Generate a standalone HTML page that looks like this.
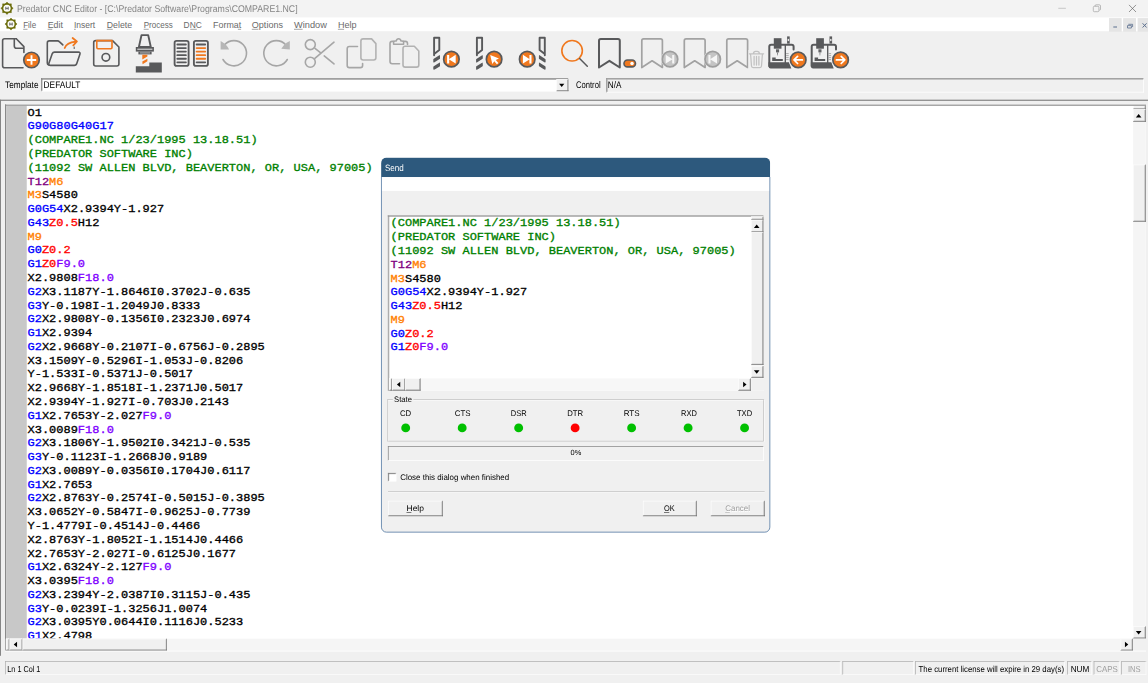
<!DOCTYPE html>
<html><head><meta charset="utf-8"><title>Predator CNC Editor</title>
<style>
html,body{margin:0;padding:0;background:#f0f0f0;overflow:hidden;}
body{width:1148px;height:683px;font-family:"Liberation Sans",sans-serif;}
svg{display:block;position:absolute;left:0;top:0;}
.code text{font-family:"Liberation Mono",monospace;font-weight:normal;font-size:11.0px;white-space:pre;stroke-width:0.32px;stroke-linejoin:round;}
text{white-space:pre;}
</style></head>
<body>
<svg width="1148" height="683" viewBox="0 0 1148 683">
<rect x="0.00" y="0.00" width="1148.00" height="683.00" fill="#f0f0f0" />
<rect x="0.00" y="0.00" width="1148.00" height="17.40" fill="#f3f3f3" />
<line x1="1058.30" y1="8.30" x2="1065.90" y2="8.30" stroke="#b4b4b4" stroke-width="0.7" />
<rect x="1093.3" y="6.3" width="5.6" height="5.4" rx="1.1" fill="none" stroke="#9a9a9a" stroke-width="0.65"/>
<path d="M1095 6.2 V5.9 Q1095 4.8 1096.1 4.8 H1099.3 Q1100.5 4.8 1100.5 6 V9.1 Q1100.5 10.2 1099.4 10.2" fill="none" stroke="#9a9a9a" stroke-width="0.65"/>
<path d="M1129 4.9 L1136 12 M1136 4.9 L1129 12" fill="none" stroke="#5e5e5e" stroke-width="0.65"/>
<polygon points="7.00,2.05 8.76,4.01 11.38,3.87 11.24,6.49 13.20,8.25 11.24,10.01 11.38,12.63 8.76,12.49 7.00,14.45 5.24,12.49 2.62,12.63 2.76,10.01 0.80,8.25 2.76,6.49 2.62,3.87 5.24,4.01" fill="#6b6c0a" stroke="#6b6c0a" stroke-width="0.5" stroke-linejoin="round"/>
<circle cx="7.0" cy="8.25" r="4.96" fill="#6b6c0a"/>
<circle cx="7.0" cy="8.25" r="3.60" fill="#fdfdfa"/>
<path d="M5.80 6.75 V9.75 M8.20 6.75 V9.75 M5.80 8.35 H8.20" stroke="#3c3c3c" stroke-width="0.75" fill="none"/>
<rect x="0.00" y="17.40" width="1148.00" height="13.80" fill="#ffffff" />
<polygon points="11.00,18.00 12.71,19.91 15.28,19.77 15.14,22.34 17.05,24.05 15.14,25.76 15.28,28.33 12.71,28.19 11.00,30.10 9.29,28.19 6.72,28.33 6.86,25.76 4.95,24.05 6.86,22.34 6.72,19.77 9.29,19.91" fill="#6b6c0a" stroke="#6b6c0a" stroke-width="0.5" stroke-linejoin="round"/>
<circle cx="11.0" cy="24.05" r="4.84" fill="#6b6c0a"/>
<circle cx="11.0" cy="24.05" r="3.51" fill="#fdfdfa"/>
<path d="M9.80 22.55 V25.55 M12.20 22.55 V25.55 M9.80 24.15 H12.20" stroke="#3c3c3c" stroke-width="0.75" fill="none"/>
<text x="23.20" y="28.00" font-family='"Liberation Sans", sans-serif' font-size="9.8" font-weight="normal" fill="#6a6a6a" text-anchor="start" textLength="12.90" lengthAdjust="spacingAndGlyphs" >File</text>
<line x1="23.20" y1="29.30" x2="27.50" y2="29.30" stroke="#6a6a6a" stroke-width="0.6" />
<text x="47.70" y="28.00" font-family='"Liberation Sans", sans-serif' font-size="9.8" font-weight="normal" fill="#6a6a6a" text-anchor="start" textLength="15.20" lengthAdjust="spacingAndGlyphs" >Edit</text>
<line x1="47.70" y1="29.30" x2="52.30" y2="29.30" stroke="#6a6a6a" stroke-width="0.6" />
<text x="74.00" y="28.00" font-family='"Liberation Sans", sans-serif' font-size="9.8" font-weight="normal" fill="#6a6a6a" text-anchor="start" textLength="21.20" lengthAdjust="spacingAndGlyphs" >Insert</text>
<line x1="74.00" y1="29.30" x2="75.80" y2="29.30" stroke="#6a6a6a" stroke-width="0.6" />
<text x="106.80" y="28.00" font-family='"Liberation Sans", sans-serif' font-size="9.8" font-weight="normal" fill="#6a6a6a" text-anchor="start" textLength="25.30" lengthAdjust="spacingAndGlyphs" >Delete</text>
<line x1="106.80" y1="29.30" x2="112.80" y2="29.30" stroke="#6a6a6a" stroke-width="0.6" />
<text x="143.70" y="28.00" font-family='"Liberation Sans", sans-serif' font-size="9.8" font-weight="normal" fill="#6a6a6a" text-anchor="start" textLength="29.00" lengthAdjust="spacingAndGlyphs" >Process</text>
<line x1="143.70" y1="29.30" x2="148.70" y2="29.30" stroke="#6a6a6a" stroke-width="0.6" />
<text x="183.60" y="28.00" font-family='"Liberation Sans", sans-serif' font-size="9.8" font-weight="normal" fill="#6a6a6a" text-anchor="start" textLength="18.20" lengthAdjust="spacingAndGlyphs" >DNC</text>
<line x1="190.20" y1="29.30" x2="196.80" y2="29.30" stroke="#6a6a6a" stroke-width="0.6" />
<text x="213.10" y="28.00" font-family='"Liberation Sans", sans-serif' font-size="9.8" font-weight="normal" fill="#6a6a6a" text-anchor="start" textLength="28.10" lengthAdjust="spacingAndGlyphs" >Format</text>
<line x1="237.90" y1="29.30" x2="241.10" y2="29.30" stroke="#6a6a6a" stroke-width="0.6" />
<text x="251.80" y="28.00" font-family='"Liberation Sans", sans-serif' font-size="9.8" font-weight="normal" fill="#6a6a6a" text-anchor="start" textLength="31.20" lengthAdjust="spacingAndGlyphs" >Options</text>
<line x1="251.80" y1="29.30" x2="258.40" y2="29.30" stroke="#6a6a6a" stroke-width="0.6" />
<text x="294.00" y="28.00" font-family='"Liberation Sans", sans-serif' font-size="9.8" font-weight="normal" fill="#6a6a6a" text-anchor="start" textLength="32.80" lengthAdjust="spacingAndGlyphs" >Window</text>
<line x1="294.00" y1="29.30" x2="302.60" y2="29.30" stroke="#6a6a6a" stroke-width="0.6" />
<text x="337.90" y="28.00" font-family='"Liberation Sans", sans-serif' font-size="9.8" font-weight="normal" fill="#6a6a6a" text-anchor="start" textLength="18.60" lengthAdjust="spacingAndGlyphs" >Help</text>
<line x1="337.90" y1="29.30" x2="344.10" y2="29.30" stroke="#6a6a6a" stroke-width="0.6" />
<rect x="1109.00" y="18.10" width="12.70" height="13.70" fill="#e5e5e5" />
<rect x="1123.10" y="18.10" width="12.90" height="13.70" fill="#e5e5e5" />
<rect x="1137.60" y="18.10" width="10.90" height="13.70" fill="#e5e5e5" />
<line x1="1113.30" y1="27.00" x2="1117.00" y2="27.00" stroke="#5b6f8e" stroke-width="1.0" />
<path d="M1128.3 24.3 H1132.6 V27 M1127.5 25.6 H1131.4 V28 H1127.5 Z" fill="none" stroke="#5b6f8e" stroke-width="0.8"/>
<path d="M1142.6 23.3 L1146.6 27.5 M1146.6 23.3 L1142.6 27.5" fill="none" stroke="#5b6f8e" stroke-width="1.0"/>
<rect x="41.00" y="78.20" width="527.60" height="13.20" fill="#ffffff" />
<rect x="41.00" y="78.20" width="527.60" height="0.65" fill="#7c7c7c" />
<rect x="41.00" y="78.20" width="0.65" height="13.20" fill="#7c7c7c" />
<rect x="41.00" y="90.75" width="527.60" height="0.65" fill="#ffffff" />
<rect x="567.95" y="78.20" width="0.65" height="13.20" fill="#ffffff" />
<rect x="41.65" y="78.85" width="526.30" height="0.65" fill="#6a6a6a" />
<rect x="41.65" y="78.85" width="0.65" height="11.90" fill="#6a6a6a" />
<rect x="556.50" y="79.20" width="11.90" height="12.00" fill="#f0f0f0" />
<rect x="556.50" y="79.20" width="11.90" height="0.60" fill="#ffffff" />
<rect x="556.50" y="79.20" width="0.60" height="12.00" fill="#ffffff" />
<rect x="557.10" y="90.00" width="11.30" height="0.60" fill="#a0a0a0" />
<rect x="567.20" y="79.80" width="0.60" height="10.80" fill="#a0a0a0" />
<rect x="556.50" y="90.60" width="11.90" height="0.60" fill="#696969" />
<rect x="567.80" y="79.20" width="0.60" height="12.00" fill="#696969" />
<polygon points="559.10,83.84 564.30,83.84 561.70,86.96" fill="#000"/>
<rect x="606.30" y="78.30" width="537.70" height="14.20" fill="#f0f0f0" />
<rect x="606.30" y="78.30" width="537.70" height="0.70" fill="#828282" />
<rect x="606.30" y="78.30" width="0.70" height="14.20" fill="#828282" />
<rect x="606.30" y="91.80" width="537.70" height="0.70" fill="#ffffff" />
<rect x="1143.30" y="78.30" width="0.70" height="14.20" fill="#ffffff" />
<rect x="607.00" y="79.00" width="536.30" height="0.70" fill="#b0b0b0" />
<rect x="607.00" y="79.00" width="0.70" height="12.80" fill="#b0b0b0" />
<rect x="0.00" y="99.60" width="1148.00" height="1.40" fill="#939393" />
<rect x="0.00" y="99.70" width="0.95" height="556.10" fill="#808080" />
<rect x="5.20" y="104.30" width="1140.80" height="546.30" fill="#ffffff" />
<rect x="5.00" y="104.30" width="1.10" height="546.30" fill="#8a8a8a" />
<rect x="6.10" y="105.90" width="20.65" height="532.80" fill="#c8c8c8" />
<g class="code">
<clipPath id="edclip"><rect x="26.8" y="105.8" width="1106.2" height="532.80"/></clipPath>
<g clip-path="url(#edclip)">
<text x="27.55" y="115.70" textLength="14.38" lengthAdjust="spacingAndGlyphs"><tspan fill="#000000" stroke="#000000">O1</tspan></text>
<text x="27.55" y="129.47" textLength="86.28" lengthAdjust="spacingAndGlyphs"><tspan fill="#0000ff" stroke="#0000ff">G90G80G40G17</tspan></text>
<text x="27.55" y="143.25" textLength="230.08" lengthAdjust="spacingAndGlyphs"><tspan fill="#008000" stroke="#008000">(COMPARE1.NC 1/23/1995 13.18.51)</tspan></text>
<text x="27.55" y="157.03" textLength="165.37" lengthAdjust="spacingAndGlyphs"><tspan fill="#008000" stroke="#008000">(PREDATOR SOFTWARE INC)</tspan></text>
<text x="27.55" y="170.80" textLength="345.12" lengthAdjust="spacingAndGlyphs"><tspan fill="#008000" stroke="#008000">(11092 SW ALLEN BLVD, BEAVERTON, OR, USA, 97005)</tspan></text>
<text x="27.55" y="184.57" textLength="35.95" lengthAdjust="spacingAndGlyphs"><tspan fill="#800080" stroke="#800080">T12</tspan><tspan fill="#ff8000" stroke="#ff8000">M6</tspan></text>
<text x="27.55" y="198.35" textLength="50.33" lengthAdjust="spacingAndGlyphs"><tspan fill="#ff8000" stroke="#ff8000">M3</tspan><tspan fill="#000000" stroke="#000000">S4580</tspan></text>
<text x="27.55" y="212.12" textLength="136.61" lengthAdjust="spacingAndGlyphs"><tspan fill="#0000ff" stroke="#0000ff">G0G54</tspan><tspan fill="#000000" stroke="#000000">X2.9394Y-1.927</tspan></text>
<text x="27.55" y="225.90" textLength="71.90" lengthAdjust="spacingAndGlyphs"><tspan fill="#0000ff" stroke="#0000ff">G43</tspan><tspan fill="#ff0000" stroke="#ff0000">Z0.5</tspan><tspan fill="#000000" stroke="#000000">H12</tspan></text>
<text x="27.55" y="239.68" textLength="14.38" lengthAdjust="spacingAndGlyphs"><tspan fill="#ff8000" stroke="#ff8000">M9</tspan></text>
<text x="27.55" y="253.45" textLength="43.14" lengthAdjust="spacingAndGlyphs"><tspan fill="#0000ff" stroke="#0000ff">G0</tspan><tspan fill="#ff0000" stroke="#ff0000">Z0.2</tspan></text>
<text x="27.55" y="267.23" textLength="57.52" lengthAdjust="spacingAndGlyphs"><tspan fill="#0000ff" stroke="#0000ff">G1</tspan><tspan fill="#ff0000" stroke="#ff0000">Z0</tspan><tspan fill="#8000ff" stroke="#8000ff">F9.0</tspan></text>
<text x="27.55" y="281.00" textLength="86.28" lengthAdjust="spacingAndGlyphs"><tspan fill="#000000" stroke="#000000">X2.9808</tspan><tspan fill="#8000ff" stroke="#8000ff">F18.0</tspan></text>
<text x="27.55" y="294.78" textLength="222.89" lengthAdjust="spacingAndGlyphs"><tspan fill="#0000ff" stroke="#0000ff">G2</tspan><tspan fill="#000000" stroke="#000000">X3.1187Y-1.8646I0.3702J-0.635</tspan></text>
<text x="27.55" y="308.55" textLength="172.56" lengthAdjust="spacingAndGlyphs"><tspan fill="#0000ff" stroke="#0000ff">G3</tspan><tspan fill="#000000" stroke="#000000">Y-0.198I-1.2049J0.8333</tspan></text>
<text x="27.55" y="322.32" textLength="222.89" lengthAdjust="spacingAndGlyphs"><tspan fill="#0000ff" stroke="#0000ff">G2</tspan><tspan fill="#000000" stroke="#000000">X2.9808Y-0.1356I0.2323J0.6974</tspan></text>
<text x="27.55" y="336.10" textLength="64.71" lengthAdjust="spacingAndGlyphs"><tspan fill="#0000ff" stroke="#0000ff">G1</tspan><tspan fill="#000000" stroke="#000000">X2.9394</tspan></text>
<text x="27.55" y="349.88" textLength="237.27" lengthAdjust="spacingAndGlyphs"><tspan fill="#0000ff" stroke="#0000ff">G2</tspan><tspan fill="#000000" stroke="#000000">X2.9668Y-0.2107I-0.6756J-0.2895</tspan></text>
<text x="27.55" y="363.65" textLength="215.70" lengthAdjust="spacingAndGlyphs"><tspan fill="#000000" stroke="#000000">X3.1509Y-0.5296I-1.053J-0.8206</tspan></text>
<text x="27.55" y="377.43" textLength="165.37" lengthAdjust="spacingAndGlyphs"><tspan fill="#000000" stroke="#000000">Y-1.533I-0.5371J-0.5017</tspan></text>
<text x="27.55" y="391.20" textLength="215.70" lengthAdjust="spacingAndGlyphs"><tspan fill="#000000" stroke="#000000">X2.9668Y-1.8518I-1.2371J0.5017</tspan></text>
<text x="27.55" y="404.98" textLength="201.32" lengthAdjust="spacingAndGlyphs"><tspan fill="#000000" stroke="#000000">X2.9394Y-1.927I-0.703J0.2143</tspan></text>
<text x="27.55" y="418.75" textLength="143.80" lengthAdjust="spacingAndGlyphs"><tspan fill="#0000ff" stroke="#0000ff">G1</tspan><tspan fill="#000000" stroke="#000000">X2.7653Y-2.027</tspan><tspan fill="#8000ff" stroke="#8000ff">F9.0</tspan></text>
<text x="27.55" y="432.52" textLength="86.28" lengthAdjust="spacingAndGlyphs"><tspan fill="#000000" stroke="#000000">X3.0089</tspan><tspan fill="#8000ff" stroke="#8000ff">F18.0</tspan></text>
<text x="27.55" y="446.30" textLength="222.89" lengthAdjust="spacingAndGlyphs"><tspan fill="#0000ff" stroke="#0000ff">G2</tspan><tspan fill="#000000" stroke="#000000">X3.1806Y-1.9502I0.3421J-0.535</tspan></text>
<text x="27.55" y="460.07" textLength="179.75" lengthAdjust="spacingAndGlyphs"><tspan fill="#0000ff" stroke="#0000ff">G3</tspan><tspan fill="#000000" stroke="#000000">Y-0.1123I-1.2668J0.9189</tspan></text>
<text x="27.55" y="473.85" textLength="222.89" lengthAdjust="spacingAndGlyphs"><tspan fill="#0000ff" stroke="#0000ff">G2</tspan><tspan fill="#000000" stroke="#000000">X3.0089Y-0.0356I0.1704J0.6117</tspan></text>
<text x="27.55" y="487.62" textLength="64.71" lengthAdjust="spacingAndGlyphs"><tspan fill="#0000ff" stroke="#0000ff">G1</tspan><tspan fill="#000000" stroke="#000000">X2.7653</tspan></text>
<text x="27.55" y="501.40" textLength="237.27" lengthAdjust="spacingAndGlyphs"><tspan fill="#0000ff" stroke="#0000ff">G2</tspan><tspan fill="#000000" stroke="#000000">X2.8763Y-0.2574I-0.5015J-0.3895</tspan></text>
<text x="27.55" y="515.18" textLength="222.89" lengthAdjust="spacingAndGlyphs"><tspan fill="#000000" stroke="#000000">X3.0652Y-0.5847I-0.9625J-0.7739</tspan></text>
<text x="27.55" y="528.95" textLength="172.56" lengthAdjust="spacingAndGlyphs"><tspan fill="#000000" stroke="#000000">Y-1.4779I-0.4514J-0.4466</tspan></text>
<text x="27.55" y="542.73" textLength="215.70" lengthAdjust="spacingAndGlyphs"><tspan fill="#000000" stroke="#000000">X2.8763Y-1.8052I-1.1514J0.4466</tspan></text>
<text x="27.55" y="556.50" textLength="208.51" lengthAdjust="spacingAndGlyphs"><tspan fill="#000000" stroke="#000000">X2.7653Y-2.027I-0.6125J0.1677</tspan></text>
<text x="27.55" y="570.27" textLength="143.80" lengthAdjust="spacingAndGlyphs"><tspan fill="#0000ff" stroke="#0000ff">G1</tspan><tspan fill="#000000" stroke="#000000">X2.6324Y-2.127</tspan><tspan fill="#8000ff" stroke="#8000ff">F9.0</tspan></text>
<text x="27.55" y="584.05" textLength="86.28" lengthAdjust="spacingAndGlyphs"><tspan fill="#000000" stroke="#000000">X3.0395</tspan><tspan fill="#8000ff" stroke="#8000ff">F18.0</tspan></text>
<text x="27.55" y="597.83" textLength="222.89" lengthAdjust="spacingAndGlyphs"><tspan fill="#0000ff" stroke="#0000ff">G2</tspan><tspan fill="#000000" stroke="#000000">X3.2394Y-2.0387I0.3115J-0.435</tspan></text>
<text x="27.55" y="611.60" textLength="179.75" lengthAdjust="spacingAndGlyphs"><tspan fill="#0000ff" stroke="#0000ff">G3</tspan><tspan fill="#000000" stroke="#000000">Y-0.0239I-1.3256J1.0074</tspan></text>
<text x="27.55" y="625.38" textLength="215.70" lengthAdjust="spacingAndGlyphs"><tspan fill="#0000ff" stroke="#0000ff">G2</tspan><tspan fill="#000000" stroke="#000000">X3.0395Y0.0644I0.1116J0.5233</tspan></text>
<text x="27.55" y="639.15" textLength="64.71" lengthAdjust="spacingAndGlyphs"><tspan fill="#0000ff" stroke="#0000ff">G1</tspan><tspan fill="#000000" stroke="#000000">X2.4798</tspan></text>
</g></g>
<rect x="1133.10" y="105.60" width="12.70" height="532.50" fill="#f5f5f5" />
<rect x="1133.10" y="105.70" width="12.70" height="3.70" fill="#f0f0f0" />
<rect x="1133.10" y="105.70" width="12.70" height="0.60" fill="#ffffff" />
<rect x="1133.10" y="105.70" width="0.60" height="3.70" fill="#ffffff" />
<rect x="1133.70" y="108.20" width="12.10" height="0.60" fill="#a0a0a0" />
<rect x="1144.60" y="106.30" width="0.60" height="2.50" fill="#a0a0a0" />
<rect x="1133.10" y="108.80" width="12.70" height="0.60" fill="#696969" />
<rect x="1145.20" y="105.70" width="0.60" height="3.70" fill="#696969" />
<rect x="1133.10" y="109.40" width="12.70" height="12.50" fill="#f0f0f0" />
<rect x="1133.10" y="109.40" width="12.70" height="0.60" fill="#ffffff" />
<rect x="1133.10" y="109.40" width="0.60" height="12.50" fill="#ffffff" />
<rect x="1133.70" y="120.70" width="12.10" height="0.60" fill="#a0a0a0" />
<rect x="1144.60" y="110.00" width="0.60" height="11.30" fill="#a0a0a0" />
<rect x="1133.10" y="121.30" width="12.70" height="0.60" fill="#696969" />
<rect x="1145.20" y="109.40" width="0.60" height="12.50" fill="#696969" />
<polygon points="1135.85,117.38 1141.45,117.38 1138.65,114.02" fill="#000"/>
<rect x="1133.10" y="164.60" width="12.70" height="57.20" fill="#f0f0f0" />
<rect x="1133.10" y="164.60" width="12.70" height="0.60" fill="#ffffff" />
<rect x="1133.10" y="164.60" width="0.60" height="57.20" fill="#ffffff" />
<rect x="1133.70" y="220.60" width="12.10" height="0.60" fill="#a0a0a0" />
<rect x="1144.60" y="165.20" width="0.60" height="56.00" fill="#a0a0a0" />
<rect x="1133.10" y="221.20" width="12.70" height="0.60" fill="#696969" />
<rect x="1145.20" y="164.60" width="0.60" height="57.20" fill="#696969" />
<rect x="1133.10" y="626.40" width="12.70" height="12.10" fill="#f0f0f0" />
<rect x="1133.10" y="626.40" width="12.70" height="0.60" fill="#ffffff" />
<rect x="1133.10" y="626.40" width="0.60" height="12.10" fill="#ffffff" />
<rect x="1133.70" y="637.30" width="12.10" height="0.60" fill="#a0a0a0" />
<rect x="1144.60" y="627.00" width="0.60" height="10.90" fill="#a0a0a0" />
<rect x="1133.10" y="637.90" width="12.70" height="0.60" fill="#696969" />
<rect x="1145.20" y="626.40" width="0.60" height="12.10" fill="#696969" />
<polygon points="1135.85,631.02 1141.45,631.02 1138.65,634.38" fill="#000"/>
<rect x="5.90" y="638.70" width="1127.10" height="11.90" fill="#f5f5f5" />
<rect x="5.90" y="638.70" width="3.70" height="11.90" fill="#f0f0f0" />
<rect x="5.90" y="638.70" width="3.70" height="0.60" fill="#ffffff" />
<rect x="5.90" y="638.70" width="0.60" height="11.90" fill="#ffffff" />
<rect x="6.50" y="649.40" width="3.10" height="0.60" fill="#a0a0a0" />
<rect x="8.40" y="639.30" width="0.60" height="10.70" fill="#a0a0a0" />
<rect x="5.90" y="650.00" width="3.70" height="0.60" fill="#696969" />
<rect x="9.00" y="638.70" width="0.60" height="11.90" fill="#696969" />
<rect x="9.60" y="638.70" width="13.00" height="11.90" fill="#f0f0f0" />
<rect x="9.60" y="638.70" width="13.00" height="0.60" fill="#ffffff" />
<rect x="9.60" y="638.70" width="0.60" height="11.90" fill="#ffffff" />
<rect x="10.20" y="649.40" width="12.40" height="0.60" fill="#a0a0a0" />
<rect x="21.40" y="639.30" width="0.60" height="10.70" fill="#a0a0a0" />
<rect x="9.60" y="650.00" width="13.00" height="0.60" fill="#696969" />
<rect x="22.00" y="638.70" width="0.60" height="11.90" fill="#696969" />
<polygon points="17.08,641.70 17.08,647.30 13.72,644.50" fill="#000"/>
<rect x="22.60" y="638.70" width="144.40" height="11.90" fill="#f0f0f0" />
<rect x="22.60" y="638.70" width="144.40" height="0.60" fill="#ffffff" />
<rect x="22.60" y="638.70" width="0.60" height="11.90" fill="#ffffff" />
<rect x="23.20" y="649.40" width="143.80" height="0.60" fill="#a0a0a0" />
<rect x="165.80" y="639.30" width="0.60" height="10.70" fill="#a0a0a0" />
<rect x="22.60" y="650.00" width="144.40" height="0.60" fill="#696969" />
<rect x="166.40" y="638.70" width="0.60" height="11.90" fill="#696969" />
<rect x="1120.60" y="638.70" width="12.30" height="11.90" fill="#f0f0f0" />
<rect x="1120.60" y="638.70" width="12.30" height="0.60" fill="#ffffff" />
<rect x="1120.60" y="638.70" width="0.60" height="11.90" fill="#ffffff" />
<rect x="1121.20" y="649.40" width="11.70" height="0.60" fill="#a0a0a0" />
<rect x="1131.70" y="639.30" width="0.60" height="10.70" fill="#a0a0a0" />
<rect x="1120.60" y="650.00" width="12.30" height="0.60" fill="#696969" />
<rect x="1132.30" y="638.70" width="0.60" height="11.90" fill="#696969" />
<polygon points="1124.92,641.70 1124.92,647.30 1128.28,644.50" fill="#000"/>
<rect x="1133.00" y="638.70" width="13.00" height="11.90" fill="#f0f0f0" />
<rect x="5.00" y="650.70" width="1141.00" height="1.00" fill="#fbfbfb" />
<rect x="5.20" y="104.50" width="1140.80" height="0.70" fill="#a0a0a0" />
<rect x="5.20" y="105.20" width="1140.80" height="0.70" fill="#8a8a8a" />
<rect x="5.20" y="661.20" width="835.30" height="13.60" fill="#f0f0f0" />
<rect x="5.20" y="661.20" width="835.30" height="0.60" fill="#a0a0a0" />
<rect x="5.20" y="661.20" width="0.60" height="13.60" fill="#a0a0a0" />
<rect x="5.20" y="674.20" width="835.30" height="0.60" fill="#ffffff" />
<rect x="839.90" y="661.20" width="0.60" height="13.60" fill="#ffffff" />
<rect x="842.50" y="661.20" width="71.20" height="13.60" fill="#f0f0f0" />
<rect x="842.50" y="661.20" width="71.20" height="0.60" fill="#a0a0a0" />
<rect x="842.50" y="661.20" width="0.60" height="13.60" fill="#a0a0a0" />
<rect x="842.50" y="674.20" width="71.20" height="0.60" fill="#ffffff" />
<rect x="913.10" y="661.20" width="0.60" height="13.60" fill="#ffffff" />
<rect x="915.30" y="661.20" width="149.60" height="13.60" fill="#f0f0f0" />
<rect x="915.30" y="661.20" width="149.60" height="0.60" fill="#a0a0a0" />
<rect x="915.30" y="661.20" width="0.60" height="13.60" fill="#a0a0a0" />
<rect x="915.30" y="674.20" width="149.60" height="0.60" fill="#ffffff" />
<rect x="1064.30" y="661.20" width="0.60" height="13.60" fill="#ffffff" />
<rect x="1067.40" y="661.20" width="24.40" height="13.60" fill="#f0f0f0" />
<rect x="1067.40" y="661.20" width="24.40" height="0.60" fill="#a0a0a0" />
<rect x="1067.40" y="661.20" width="0.60" height="13.60" fill="#a0a0a0" />
<rect x="1067.40" y="674.20" width="24.40" height="0.60" fill="#ffffff" />
<rect x="1091.20" y="661.20" width="0.60" height="13.60" fill="#ffffff" />
<rect x="1093.70" y="661.20" width="25.80" height="13.60" fill="#f0f0f0" />
<rect x="1093.70" y="661.20" width="25.80" height="0.60" fill="#a0a0a0" />
<rect x="1093.70" y="661.20" width="0.60" height="13.60" fill="#a0a0a0" />
<rect x="1093.70" y="674.20" width="25.80" height="0.60" fill="#ffffff" />
<rect x="1118.90" y="661.20" width="0.60" height="13.60" fill="#ffffff" />
<rect x="1121.40" y="661.20" width="24.90" height="13.60" fill="#f0f0f0" />
<rect x="1121.40" y="661.20" width="24.90" height="0.60" fill="#a0a0a0" />
<rect x="1121.40" y="661.20" width="0.60" height="13.60" fill="#a0a0a0" />
<rect x="1121.40" y="674.20" width="24.90" height="0.60" fill="#ffffff" />
<rect x="1145.70" y="661.20" width="0.60" height="13.60" fill="#ffffff" />
<g id="toolbar">
<path d="M23.9 52.5 V48.2 M16.3 38.8 H4.6 Q2.6 38.8 2.6 40.8 V65.7 Q2.6 67.7 4.6 67.7 H23.0 M16.3 38.8 L23.9 46.6 V48.2 H16.6 Q14.3 48.2 14.3 45.9 V38.8" fill="none" stroke="#58595b" stroke-width="1.6" stroke-linecap="round" stroke-linejoin="round" />
<circle cx="31.50" cy="60.00" r="7.75" fill="#f0781e" stroke="#58595b" stroke-width="1.7"/>
<path d="M26.8 60 H36.2 M31.5 55.3 V64.7" stroke="#fff" stroke-width="1.9" fill="none"/>
<path d="M48.6 65.0 Q47.3 64.6 47.3 63.0 V42.9 Q47.3 40.9 49.3 40.9 H57.6 Q58.6 40.9 59.3 41.6 L62.8 44.9" fill="none" stroke="#58595b" stroke-width="1.6" stroke-linecap="round" stroke-linejoin="round" />
<path d="M74.2 47.0 V48.6" fill="none" stroke="#58595b" stroke-width="1.0" stroke-linecap="round" stroke-linejoin="round" />
<path d="M50.6 65.4 Q48.2 65.4 48.9 63.2 L52.3 53.6 Q52.9 52.1 54.5 52.1 H78.4 Q80.6 52.1 79.9 54.2 L76.6 63.9 Q76.0 65.4 74.4 65.4 Z" fill="none" stroke="#58595b" stroke-width="1.6" stroke-linecap="round" stroke-linejoin="round" />
<path d="M64.7 48.0 Q66.6 42.6 75.6 41.6 M72.6 38.0 L76.9 41.5 L73.3 45.4" fill="none" stroke="#f0781e" stroke-width="1.8" stroke-linecap="round" stroke-linejoin="round" />
<path d="M95.7 40.6 H112.5 L118.9 47.0 V64.0 Q118.9 66.0 116.9 66.0 H95.7 Q93.7 66.0 93.7 64.0 V42.6 Q93.7 40.6 95.7 40.6 Z" fill="none" stroke="#58595b" stroke-width="1.6" stroke-linecap="round" stroke-linejoin="round" />
<path d="M96.8 40.6 V47.6 Q96.8 48.8 98.0 48.8 H110.8 Q112.0 48.8 112.0 47.6 V40.6 Z" fill="none" stroke="#f0781e" stroke-width="1.6" stroke-linecap="round" stroke-linejoin="round" />
<circle cx="105.90" cy="57.30" r="3.85" fill="none" stroke="#58595b" stroke-width="1.6"/>
<path d="M141.5 35.1 H148.2 L150.8 47.0 H138.9 Z" fill="none" stroke="#58595b" stroke-width="1.9" stroke-linecap="round" stroke-linejoin="round" />
<rect x="135.8" y="47.0" width="18.1" height="4.6" fill="#58595b"/>
<rect x="137.3" y="48.7" width="15.1" height="1.0" fill="#e9e9e9"/>
<rect x="138.4" y="51.6" width="13.2" height="2.8" fill="#58595b"/>
<rect x="139.9" y="52.6" width="10.2" height="0.7" fill="#d9d9d9"/>
<path d="M142.3 54.8 H147.4 V56.5 L142.3 59.4 Z M142.3 61.6 L147.4 58.7 V61.3 L142.6 64.2 Z" fill="#f0781e"/>
<path d="M135.8 66.2 H149.3 V62.6 H161.8 V72.5 H135.8 Z" fill="#58595b"/>
<rect x="174.6" y="40.9" width="14.0" height="24.9" rx="1.9" fill="none" stroke="#58595b" stroke-width="1.85"/>
<line x1="177.30" y1="44.50" x2="185.90" y2="44.50" stroke="#58595b" stroke-width="1.8" stroke-linecap="round"/>
<line x1="177.30" y1="48.06" x2="185.90" y2="48.06" stroke="#58595b" stroke-width="1.8" stroke-linecap="round"/>
<line x1="177.30" y1="51.62" x2="185.90" y2="51.62" stroke="#58595b" stroke-width="1.8" stroke-linecap="round"/>
<line x1="177.30" y1="55.18" x2="185.90" y2="55.18" stroke="#58595b" stroke-width="1.8" stroke-linecap="round"/>
<line x1="177.30" y1="58.74" x2="185.90" y2="58.74" stroke="#58595b" stroke-width="1.8" stroke-linecap="round"/>
<line x1="177.30" y1="62.30" x2="185.90" y2="62.30" stroke="#58595b" stroke-width="1.8" stroke-linecap="round"/>
<rect x="193.9" y="40.9" width="14.0" height="24.9" rx="1.9" fill="none" stroke="#58595b" stroke-width="1.85"/>
<line x1="196.60" y1="44.50" x2="205.20" y2="44.50" stroke="#58595b" stroke-width="1.8" stroke-linecap="round"/>
<line x1="196.60" y1="48.06" x2="205.20" y2="48.06" stroke="#f0781e" stroke-width="1.8" stroke-linecap="round"/>
<line x1="196.60" y1="51.62" x2="205.20" y2="51.62" stroke="#f0781e" stroke-width="1.8" stroke-linecap="round"/>
<line x1="196.60" y1="55.18" x2="205.20" y2="55.18" stroke="#f0781e" stroke-width="1.8" stroke-linecap="round"/>
<line x1="196.60" y1="58.74" x2="205.20" y2="58.74" stroke="#f0781e" stroke-width="1.8" stroke-linecap="round"/>
<line x1="196.60" y1="62.30" x2="205.20" y2="62.30" stroke="#58595b" stroke-width="1.8" stroke-linecap="round"/>
<path d="M224.54 44.77 A12.6 12.6 0 1 1 222.99 59.50" fill="none" stroke="#a6a6a6" stroke-width="1.6" stroke-linecap="round" stroke-linejoin="round" />
<path d="M220.6 41.0 L220.6 49.4 L229.1 49.4 Q226.5 44.0 220.6 41.0 Z" fill="#b6b6b6" transform="rotate(0)"/>
<path d="M285.76 44.77 A12.6 12.6 0 1 0 287.31 59.50" fill="none" stroke="#a6a6a6" stroke-width="1.6" stroke-linecap="round" stroke-linejoin="round" />
<path d="M289.8 40.9 L289.8 49.4 L281.3 48.8 Q284.0 43.6 289.8 40.9 Z" fill="#b6b6b6"/>
<circle cx="310.30" cy="44.60" r="5.00" fill="none" stroke="#a6a6a6" stroke-width="1.6"/>
<circle cx="310.30" cy="62.20" r="5.00" fill="none" stroke="#a6a6a6" stroke-width="1.6"/>
<path d="M314.9 58.4 L334.0 42.2 M315.0 48.4 L320.4 52.6 M324.2 55.9 L334.0 63.9" fill="none" stroke="#a6a6a6" stroke-width="1.6" stroke-linecap="round" stroke-linejoin="round" />
<path d="M357.5 46.5 H349.4 Q347.2 46.5 347.2 48.7 V65.4 Q347.2 67.6 349.4 67.6 H360.4 Q362.6 67.6 362.6 65.4 V63.5" fill="none" stroke="#a6a6a6" stroke-width="1.6" stroke-linecap="round" stroke-linejoin="round" />
<path d="M363.1 38.9 H371.6 L375.9 43.6 V57.8 Q375.9 60.0 373.7 60.0 H363.1 Q360.9 60.0 360.9 57.8 V41.1 Q360.9 38.9 363.1 38.9 Z" fill="none" stroke="#b2b2b2" stroke-width="1.6" stroke-linecap="round" stroke-linejoin="round" />
<path d="M399.5 63.7 H392.2 Q390.0 63.7 390.0 61.5 V43.6 Q390.0 41.4 392.2 41.4 H393.6 M403.4 41.4 H405.3 Q407.5 41.4 407.5 43.6 V44.5" fill="none" stroke="#a6a6a6" stroke-width="1.6" stroke-linecap="round" stroke-linejoin="round" />
<path d="M393.6 44.3 V42.3 Q393.6 40.9 395.0 40.9 H396.3 Q396.6 38.7 398.6 38.7 Q400.6 38.7 400.9 40.9 H402.2 Q403.6 40.9 403.6 42.3 V44.3 Z" fill="none" stroke="#a6a6a6" stroke-width="1.5" stroke-linecap="round" stroke-linejoin="round" />
<path d="M405.2 46.3 H414.3 L418.8 51.0 V64.9 Q418.8 67.1 416.6 67.1 H405.2 Q403.0 67.1 403.0 64.9 V48.5 Q403.0 46.3 405.2 46.3 Z" fill="none" stroke="#b2b2b2" stroke-width="1.6" stroke-linecap="round" stroke-linejoin="round" />
<g>
<path d="M434.10 55.3 V37.8 H439.30 V49.9 L434.10 54.1" fill="none" stroke="#58595b" stroke-width="1.9" stroke-linecap="round" stroke-linejoin="round" />
<clipPath id="dc433"><rect x="433.30" y="54.8" width="6.7" height="14.9"/></clipPath>
<g clip-path="url(#dc433)">
<path d="M432.80 61.40 L440.60 56.40" stroke="#58595b" stroke-width="3.3" fill="none"/>
<path d="M432.80 68.80 L440.60 63.80" stroke="#58595b" stroke-width="3.3" fill="none"/>
</g></g>
<circle cx="451.40" cy="59.20" r="7.75" fill="#f0781e" stroke="#58595b" stroke-width="1.7"/>
<path d="M447.1 55.0 H449.2 V58.9 L455.7 54.8 V63.6 L449.2 59.5 V63.4 H447.1 Z" fill="#fff"/>
<g>
<path d="M476.90 55.3 V37.8 H482.10 V49.9 L476.90 54.1" fill="none" stroke="#58595b" stroke-width="1.9" stroke-linecap="round" stroke-linejoin="round" />
<clipPath id="dc476"><rect x="476.10" y="54.8" width="6.7" height="14.9"/></clipPath>
<g clip-path="url(#dc476)">
<path d="M475.60 61.40 L483.40 56.40" stroke="#58595b" stroke-width="3.3" fill="none"/>
<path d="M475.60 68.80 L483.40 63.80" stroke="#58595b" stroke-width="3.3" fill="none"/>
</g></g>
<circle cx="494.10" cy="59.20" r="7.75" fill="#f0781e" stroke="#58595b" stroke-width="1.7"/>
<path d="M490.2 54.9 L499.0 58.6 L495.8 60.0 L498.4 63.0 L496.9 64.2 L494.3 61.3 L492.3 64.0 Z" fill="#fff"/>
<circle cx="527.20" cy="59.20" r="7.75" fill="#f0781e" stroke="#58595b" stroke-width="1.7"/>
<path d="M531.5 55.0 H529.4 V58.9 L522.9 54.8 V63.6 L529.4 59.5 V63.4 H531.5 Z" fill="#fff"/>
<g transform="translate(1084.40 0) scale(-1 1)">
<path d="M539.60 55.3 V37.8 H544.80 V49.9 L539.60 54.1" fill="none" stroke="#58595b" stroke-width="1.9" stroke-linecap="round" stroke-linejoin="round" />
<clipPath id="dc538"><rect x="538.80" y="54.8" width="6.7" height="14.9"/></clipPath>
<g clip-path="url(#dc538)">
<path d="M538.30 61.40 L546.10 56.40" stroke="#58595b" stroke-width="3.3" fill="none"/>
<path d="M538.30 68.80 L546.10 63.80" stroke="#58595b" stroke-width="3.3" fill="none"/>
</g></g>
<circle cx="572.10" cy="50.80" r="10.25" fill="none" stroke="#f0781e" stroke-width="1.6"/>
<path d="M579.6 58.5 L587.3 66.3" fill="none" stroke="#58595b" stroke-width="1.5" stroke-linecap="round" stroke-linejoin="round" />
<path d="M599.00 67.5 V40.7 Q599.00 38.9 600.80 38.9 H618.00 Q619.80 38.9 619.80 40.7 V67.5 L609.40 60.8 Z" fill="none" stroke="#58595b" stroke-width="2.0" stroke-linecap="round" stroke-linejoin="round" />
<rect x="624.0" y="60.0" width="11.5" height="6.9" rx="3.45" fill="#f0781e" stroke="#58595b" stroke-width="1.6"/>
<circle cx="632.00" cy="63.45" r="1.75" fill="#fff" stroke="none" stroke-width="0"/>
<clipPath id="bk16"><path d="M0 0 H700 V80 H0 Z M670 50.0 a9.3 9.3 0 1 0 0.01 0 Z" clip-rule="evenodd"/></clipPath>
<path d="M641.80 67.5 V40.7 Q641.80 38.9 643.60 38.9 H660.60 Q662.40 38.9 662.40 40.7 V67.5 L652.10 60.8 Z" fill="none" stroke="#a2a2a2" stroke-width="1.7" stroke-linecap="round" stroke-linejoin="round" />
<circle cx="670.00" cy="59.20" r="9.00" fill="#f0f0f0" stroke="none" stroke-width="0"/>
<circle cx="670.00" cy="59.20" r="7.75" fill="#c4c4c4" stroke="#9e9e9e" stroke-width="1.7"/>
<path d="M674.3 55.0 H672.2 V58.9 L665.7 54.8 V63.6 L672.2 59.5 V63.4 H674.3 Z" fill="#f6f6f6"/>
<path d="M684.30 67.5 V40.7 Q684.30 38.9 686.10 38.9 H703.30 Q705.10 38.9 705.10 40.7 V67.5 L694.70 60.8 Z" fill="none" stroke="#a2a2a2" stroke-width="1.7" stroke-linecap="round" stroke-linejoin="round" />
<circle cx="712.70" cy="59.20" r="9.00" fill="#f0f0f0" stroke="none" stroke-width="0"/>
<circle cx="712.70" cy="59.20" r="7.75" fill="#c4c4c4" stroke="#9e9e9e" stroke-width="1.7"/>
<path d="M708.4 55.0 H710.5 V58.9 L717.0 54.8 V63.6 L710.5 59.5 V63.4 H708.4 Z" fill="#f6f6f6"/>
<path d="M726.80 67.5 V40.7 Q726.80 38.9 728.60 38.9 H745.80 Q747.60 38.9 747.60 40.7 V67.5 L737.20 60.8 Z" fill="none" stroke="#a2a2a2" stroke-width="1.7" stroke-linecap="round" stroke-linejoin="round" />
<rect x="748.40" y="50.00" width="16.00" height="18.60" fill="#f0f0f0" />
<path d="M749.4 53.8 H763.6 M753.4 53.6 Q753.5 51.3 755.6 51.3 H757.2 Q759.3 51.3 759.4 53.6 M750.6 54.2 L751.5 66.0 Q751.6 67.5 753.1 67.5 H759.9 Q761.4 67.5 761.5 66.0 L762.4 54.2 M754.1 56.4 V65.0 M756.5 56.4 V65.0 M758.9 56.4 V65.0" fill="none" stroke="#c1c1c1" stroke-width="1.25" stroke-linecap="round" stroke-linejoin="round" />
<path d="M769.30 66.0 V46.6 Q769.30 44.7 771.20 44.7 H791.70 Q793.60 44.7 793.60 46.6 V49.6" fill="none" stroke="#58595b" stroke-width="2.0" stroke-linecap="round" stroke-linejoin="round" />
<path d="M768.50 62.2 H789.10 L791.30 68.4 H770.70 Q768.50 68.4 768.50 66.2 Z" fill="#58595b"/>
<path d="M772.20 61.0 V57.5 H775.70 V59.1 H782.80 V61.0 Z" fill="#58595b"/>
<line x1="785.30" y1="45.00" x2="785.30" y2="63.00" stroke="#58595b" stroke-width="1.35" />
<line x1="786.10" y1="53.60" x2="788.70" y2="53.60" stroke="#8c8c8c" stroke-width="0.7" />
<line x1="786.10" y1="55.60" x2="788.70" y2="55.60" stroke="#8c8c8c" stroke-width="0.7" />
<line x1="786.10" y1="57.60" x2="788.70" y2="57.60" stroke="#8c8c8c" stroke-width="0.7" />
<line x1="786.10" y1="59.60" x2="788.70" y2="59.60" stroke="#8c8c8c" stroke-width="0.7" />
<rect x="773.80" y="38.2" width="7.7" height="10.5" fill="#58595b"/>
<rect x="776.00" y="49.3" width="3.1" height="3.1" fill="#626365"/>
<path d="M777.00 52.4 H778.10 L777.80 55.5 H777.30 Z" fill="#77787a"/>
<rect x="787.10" y="36.4" width="2.6" height="7.2" fill="#58595b"/>
<rect x="787.70" y="38.9" width="1.4" height="2.2" fill="#e6e6e6"/>
<circle cx="798.20" cy="59.90" r="9.35" fill="#f0f0f0" stroke="none" stroke-width="0"/>
<circle cx="798.20" cy="59.90" r="7.75" fill="#f0781e" stroke="#58595b" stroke-width="1.7"/>
<path d="M802.40 59.9 H794.40 M797.60 56.3 L794.00 59.9 L797.60 63.5" fill="none" stroke="#fff" stroke-width="1.7" stroke-linecap="round" stroke-linejoin="round" />
<path d="M811.70 66.0 V46.6 Q811.70 44.7 813.60 44.7 H834.10 Q836.00 44.7 836.00 46.6 V49.6" fill="none" stroke="#58595b" stroke-width="2.0" stroke-linecap="round" stroke-linejoin="round" />
<path d="M810.90 62.2 H831.50 L833.70 68.4 H813.10 Q810.90 68.4 810.90 66.2 Z" fill="#58595b"/>
<path d="M814.60 61.0 V57.5 H818.10 V59.1 H825.20 V61.0 Z" fill="#58595b"/>
<line x1="827.70" y1="45.00" x2="827.70" y2="63.00" stroke="#58595b" stroke-width="1.35" />
<line x1="828.50" y1="53.60" x2="831.10" y2="53.60" stroke="#8c8c8c" stroke-width="0.7" />
<line x1="828.50" y1="55.60" x2="831.10" y2="55.60" stroke="#8c8c8c" stroke-width="0.7" />
<line x1="828.50" y1="57.60" x2="831.10" y2="57.60" stroke="#8c8c8c" stroke-width="0.7" />
<line x1="828.50" y1="59.60" x2="831.10" y2="59.60" stroke="#8c8c8c" stroke-width="0.7" />
<rect x="816.20" y="38.2" width="7.7" height="10.5" fill="#58595b"/>
<rect x="818.40" y="49.3" width="3.1" height="3.1" fill="#626365"/>
<path d="M819.40 52.4 H820.50 L820.20 55.5 H819.70 Z" fill="#77787a"/>
<rect x="829.50" y="36.4" width="2.6" height="7.2" fill="#58595b"/>
<rect x="830.10" y="38.9" width="1.4" height="2.2" fill="#e6e6e6"/>
<circle cx="840.60" cy="59.90" r="9.35" fill="#f0f0f0" stroke="none" stroke-width="0"/>
<circle cx="840.60" cy="59.90" r="7.75" fill="#f0781e" stroke="#58595b" stroke-width="1.7"/>
<path d="M836.40 59.9 H844.40 M841.20 56.3 L844.80 59.9 L841.20 63.5" fill="none" stroke="#fff" stroke-width="1.7" stroke-linecap="round" stroke-linejoin="round" />
</g>
<clipPath id="dlgclip"><rect x="381.1" y="157.6" width="389.10" height="374.90" rx="5.3"/></clipPath>
<g clip-path="url(#dlgclip)">
<rect x="381.10" y="157.60" width="389.10" height="374.90" fill="#f0f0f0" />
<rect x="381.10" y="157.60" width="389.10" height="19.50" fill="#2d597d" />
<rect x="381.10" y="177.10" width="389.10" height="13.80" fill="#ffffff" />
</g>
<clipPath id="dlgb"><rect x="380.1" y="177.1" width="391.10" height="356.40"/></clipPath>
<rect x="381.45" y="157.95" width="388.40" height="374.20" rx="5.0" fill="none" stroke="#6487ad" stroke-width="0.9" clip-path="url(#dlgb)"/>
<rect x="387.80" y="215.20" width="376.20" height="175.60" fill="#ffffff" />
<rect x="387.80" y="215.20" width="376.20" height="0.70" fill="#a0a0a0" />
<rect x="387.80" y="215.90" width="376.20" height="0.70" fill="#8c8c8c" />
<rect x="387.80" y="215.20" width="0.70" height="175.60" fill="#a0a0a0" />
<rect x="388.50" y="215.90" width="0.70" height="174.90" fill="#8c8c8c" />
<rect x="763.40" y="215.20" width="0.60" height="175.60" fill="#ffffff" />
<g class="code">
<clipPath id="dtclip"><rect x="389.3" y="216.6" width="361.90" height="161.80"/></clipPath>
<g clip-path="url(#dtclip)">
<text x="390.60" y="226.40" textLength="230.08" lengthAdjust="spacingAndGlyphs"><tspan fill="#008000" stroke="#008000">(COMPARE1.NC 1/23/1995 13.18.51)</tspan></text>
<text x="390.60" y="240.18" textLength="165.37" lengthAdjust="spacingAndGlyphs"><tspan fill="#008000" stroke="#008000">(PREDATOR SOFTWARE INC)</tspan></text>
<text x="390.60" y="253.95" textLength="345.12" lengthAdjust="spacingAndGlyphs"><tspan fill="#008000" stroke="#008000">(11092 SW ALLEN BLVD, BEAVERTON, OR, USA, 97005)</tspan></text>
<text x="390.60" y="267.73" textLength="35.95" lengthAdjust="spacingAndGlyphs"><tspan fill="#800080" stroke="#800080">T12</tspan><tspan fill="#ff8000" stroke="#ff8000">M6</tspan></text>
<text x="390.60" y="281.50" textLength="50.33" lengthAdjust="spacingAndGlyphs"><tspan fill="#ff8000" stroke="#ff8000">M3</tspan><tspan fill="#000000" stroke="#000000">S4580</tspan></text>
<text x="390.60" y="295.27" textLength="136.61" lengthAdjust="spacingAndGlyphs"><tspan fill="#0000ff" stroke="#0000ff">G0G54</tspan><tspan fill="#000000" stroke="#000000">X2.9394Y-1.927</tspan></text>
<text x="390.60" y="309.05" textLength="71.90" lengthAdjust="spacingAndGlyphs"><tspan fill="#0000ff" stroke="#0000ff">G43</tspan><tspan fill="#ff0000" stroke="#ff0000">Z0.5</tspan><tspan fill="#000000" stroke="#000000">H12</tspan></text>
<text x="390.60" y="322.82" textLength="14.38" lengthAdjust="spacingAndGlyphs"><tspan fill="#ff8000" stroke="#ff8000">M9</tspan></text>
<text x="390.60" y="336.60" textLength="43.14" lengthAdjust="spacingAndGlyphs"><tspan fill="#0000ff" stroke="#0000ff">G0</tspan><tspan fill="#ff0000" stroke="#ff0000">Z0.2</tspan></text>
<text x="390.60" y="350.38" textLength="57.52" lengthAdjust="spacingAndGlyphs"><tspan fill="#0000ff" stroke="#0000ff">G1</tspan><tspan fill="#ff0000" stroke="#ff0000">Z0</tspan><tspan fill="#8000ff" stroke="#8000ff">F9.0</tspan></text>
</g></g>
<rect x="751.20" y="216.60" width="12.20" height="161.80" fill="#f5f5f5" />
<rect x="751.20" y="216.60" width="12.20" height="3.30" fill="#f0f0f0" />
<rect x="751.20" y="216.60" width="12.20" height="0.60" fill="#ffffff" />
<rect x="751.20" y="216.60" width="0.60" height="3.30" fill="#ffffff" />
<rect x="751.80" y="218.70" width="11.60" height="0.60" fill="#a0a0a0" />
<rect x="762.20" y="217.20" width="0.60" height="2.10" fill="#a0a0a0" />
<rect x="751.20" y="219.30" width="12.20" height="0.60" fill="#696969" />
<rect x="762.80" y="216.60" width="0.60" height="3.30" fill="#696969" />
<rect x="751.20" y="219.90" width="12.20" height="12.40" fill="#f0f0f0" />
<rect x="751.20" y="219.90" width="12.20" height="0.60" fill="#ffffff" />
<rect x="751.20" y="219.90" width="0.60" height="12.40" fill="#ffffff" />
<rect x="751.80" y="231.10" width="11.60" height="0.60" fill="#a0a0a0" />
<rect x="762.20" y="220.50" width="0.60" height="11.20" fill="#a0a0a0" />
<rect x="751.20" y="231.70" width="12.20" height="0.60" fill="#696969" />
<rect x="762.80" y="219.90" width="0.60" height="12.40" fill="#696969" />
<polygon points="753.90,227.98 759.50,227.98 756.70,224.62" fill="#000"/>
<rect x="751.20" y="232.30" width="12.20" height="132.70" fill="#f0f0f0" />
<rect x="751.20" y="232.30" width="12.20" height="0.60" fill="#ffffff" />
<rect x="751.20" y="232.30" width="0.60" height="132.70" fill="#ffffff" />
<rect x="751.80" y="363.80" width="11.60" height="0.60" fill="#a0a0a0" />
<rect x="762.20" y="232.90" width="0.60" height="131.50" fill="#a0a0a0" />
<rect x="751.20" y="364.40" width="12.20" height="0.60" fill="#696969" />
<rect x="762.80" y="232.30" width="0.60" height="132.70" fill="#696969" />
<rect x="751.20" y="365.90" width="12.20" height="12.00" fill="#f0f0f0" />
<rect x="751.20" y="365.90" width="12.20" height="0.60" fill="#ffffff" />
<rect x="751.20" y="365.90" width="0.60" height="12.00" fill="#ffffff" />
<rect x="751.80" y="376.70" width="11.60" height="0.60" fill="#a0a0a0" />
<rect x="762.20" y="366.50" width="0.60" height="10.80" fill="#a0a0a0" />
<rect x="751.20" y="377.30" width="12.20" height="0.60" fill="#696969" />
<rect x="762.80" y="365.90" width="0.60" height="12.00" fill="#696969" />
<polygon points="753.90,370.32 759.50,370.32 756.70,373.68" fill="#000"/>
<rect x="389.20" y="378.40" width="362.00" height="12.30" fill="#f7f7f7" />
<rect x="751.20" y="378.40" width="12.80" height="12.30" fill="#f0f0f0" />
<rect x="389.20" y="378.40" width="3.00" height="12.30" fill="#f0f0f0" />
<rect x="389.20" y="378.40" width="3.00" height="0.60" fill="#ffffff" />
<rect x="389.20" y="378.40" width="0.60" height="12.30" fill="#ffffff" />
<rect x="389.80" y="389.50" width="2.40" height="0.60" fill="#a0a0a0" />
<rect x="391.00" y="379.00" width="0.60" height="11.10" fill="#a0a0a0" />
<rect x="389.20" y="390.10" width="3.00" height="0.60" fill="#696969" />
<rect x="391.60" y="378.40" width="0.60" height="12.30" fill="#696969" />
<rect x="392.20" y="378.40" width="13.10" height="12.30" fill="#f0f0f0" />
<rect x="392.20" y="378.40" width="13.10" height="0.60" fill="#ffffff" />
<rect x="392.20" y="378.40" width="0.60" height="12.30" fill="#ffffff" />
<rect x="392.80" y="389.50" width="12.50" height="0.60" fill="#a0a0a0" />
<rect x="404.10" y="379.00" width="0.60" height="11.10" fill="#a0a0a0" />
<rect x="392.20" y="390.10" width="13.10" height="0.60" fill="#696969" />
<rect x="404.70" y="378.40" width="0.60" height="12.30" fill="#696969" />
<polygon points="400.28,381.70 400.28,387.30 396.92,384.50" fill="#000"/>
<rect x="405.30" y="378.40" width="15.20" height="12.30" fill="#f0f0f0" />
<rect x="405.30" y="378.40" width="15.20" height="0.60" fill="#ffffff" />
<rect x="405.30" y="378.40" width="0.60" height="12.30" fill="#ffffff" />
<rect x="405.90" y="389.50" width="14.60" height="0.60" fill="#a0a0a0" />
<rect x="419.30" y="379.00" width="0.60" height="11.10" fill="#a0a0a0" />
<rect x="405.30" y="390.10" width="15.20" height="0.60" fill="#696969" />
<rect x="419.90" y="378.40" width="0.60" height="12.30" fill="#696969" />
<rect x="738.30" y="378.40" width="12.60" height="12.30" fill="#f0f0f0" />
<rect x="738.30" y="378.40" width="12.60" height="0.60" fill="#ffffff" />
<rect x="738.30" y="378.40" width="0.60" height="12.30" fill="#ffffff" />
<rect x="738.90" y="389.50" width="12.00" height="0.60" fill="#a0a0a0" />
<rect x="749.70" y="379.00" width="0.60" height="11.10" fill="#a0a0a0" />
<rect x="738.30" y="390.10" width="12.60" height="0.60" fill="#696969" />
<rect x="750.30" y="378.40" width="0.60" height="12.30" fill="#696969" />
<polygon points="743.12,381.70 743.12,387.30 746.48,384.50" fill="#000"/>
<rect x="387.8" y="399.6" width="375.90" height="41.60" fill="none" stroke="#d5d5d5" stroke-width="0.7"/>
<rect x="388.4" y="400.2" width="375.90" height="41.60" fill="none" stroke="#ffffff" stroke-width="0.5"/>
<rect x="387.8" y="399.6" width="375.90" height="41.60" fill="none" stroke="#c4c4c4" stroke-width="0.6"/>
<rect x="392.80" y="396.00" width="20.60" height="8.00" fill="#f0f0f0" />
<circle cx="405.70" cy="427.9" r="4.45" fill="#00c000"/>
<circle cx="462.18" cy="427.9" r="4.45" fill="#00c000"/>
<circle cx="518.66" cy="427.9" r="4.45" fill="#00c000"/>
<circle cx="575.14" cy="427.9" r="4.45" fill="#ff0000"/>
<circle cx="631.62" cy="427.9" r="4.45" fill="#00c000"/>
<circle cx="688.10" cy="427.9" r="4.45" fill="#00c000"/>
<circle cx="744.58" cy="427.9" r="4.45" fill="#00c000"/>
<rect x="387.90" y="446.10" width="376.10" height="14.60" fill="#f0f0f0" />
<rect x="387.90" y="446.10" width="376.10" height="0.70" fill="#808080" />
<rect x="387.90" y="446.10" width="0.70" height="14.60" fill="#808080" />
<rect x="387.90" y="460.00" width="376.10" height="0.70" fill="#ffffff" />
<rect x="763.30" y="446.10" width="0.70" height="14.60" fill="#ffffff" />
<rect x="387.90" y="472.90" width="8.40" height="8.50" fill="#ffffff" />
<rect x="387.90" y="472.90" width="8.40" height="0.60" fill="#808080" />
<rect x="387.90" y="472.90" width="0.60" height="8.50" fill="#808080" />
<rect x="387.90" y="480.80" width="8.40" height="0.60" fill="#ffffff" />
<rect x="395.70" y="472.90" width="0.60" height="8.50" fill="#ffffff" />
<rect x="388.50" y="473.50" width="7.20" height="0.60" fill="#696969" />
<rect x="388.50" y="473.50" width="0.60" height="7.30" fill="#696969" />
<rect x="388.00" y="491.00" width="376.60" height="0.90" fill="#c6c6c6" />
<rect x="388.00" y="491.90" width="376.60" height="0.60" fill="#fafafa" />
<rect x="388.20" y="500.80" width="54.70" height="15.40" fill="#f0f0f0" />
<rect x="388.20" y="500.80" width="54.70" height="0.60" fill="#ffffff" />
<rect x="388.20" y="500.80" width="0.60" height="15.40" fill="#ffffff" />
<rect x="388.80" y="515.00" width="54.10" height="0.60" fill="#a0a0a0" />
<rect x="441.70" y="501.40" width="0.60" height="14.20" fill="#a0a0a0" />
<rect x="388.20" y="515.60" width="54.70" height="0.60" fill="#696969" />
<rect x="442.30" y="500.80" width="0.60" height="15.40" fill="#696969" />
<line x1="406.50" y1="512.50" x2="411.40" y2="512.50" stroke="#000" stroke-width="0.5" />
<rect x="642.90" y="500.80" width="54.00" height="15.40" fill="#f0f0f0" />
<rect x="642.90" y="500.80" width="54.00" height="0.60" fill="#ffffff" />
<rect x="642.90" y="500.80" width="0.60" height="15.40" fill="#ffffff" />
<rect x="643.50" y="515.00" width="53.40" height="0.60" fill="#a0a0a0" />
<rect x="695.70" y="501.40" width="0.60" height="14.20" fill="#a0a0a0" />
<rect x="642.90" y="515.60" width="54.00" height="0.60" fill="#696969" />
<rect x="696.30" y="500.80" width="0.60" height="15.40" fill="#696969" />
<line x1="664.00" y1="512.50" x2="669.30" y2="512.50" stroke="#000" stroke-width="0.5" />
<rect x="710.80" y="500.80" width="54.00" height="15.40" fill="#f0f0f0" />
<rect x="710.80" y="500.80" width="54.00" height="0.60" fill="#ffffff" />
<rect x="710.80" y="500.80" width="0.60" height="15.40" fill="#ffffff" />
<rect x="711.40" y="515.00" width="53.40" height="0.60" fill="#a0a0a0" />
<rect x="763.60" y="501.40" width="0.60" height="14.20" fill="#a0a0a0" />
<rect x="710.80" y="515.60" width="54.00" height="0.60" fill="#696969" />
<rect x="764.20" y="500.80" width="0.60" height="15.40" fill="#696969" />
<line x1="725.20" y1="512.50" x2="729.80" y2="512.50" stroke="#a0a0a0" stroke-width="0.5" />
<g style="will-change:opacity;text-rendering:geometricPrecision">
<text x="16.90" y="11.60" font-family='"Liberation Sans", sans-serif' font-size="9.8" font-weight="normal" fill="#858585" text-anchor="start" textLength="280.70" lengthAdjust="spacingAndGlyphs" >Predator CNC Editor - [C:\Predator Software\Programs\COMPARE1.NC]</text>
<text x="5.10" y="88.00" font-family='"Liberation Sans", sans-serif' font-size="9.6" font-weight="normal" fill="#000" text-anchor="start" textLength="33.40" lengthAdjust="spacingAndGlyphs" >Template</text>
<text x="43.60" y="88.20" font-family='"Liberation Sans", sans-serif' font-size="9.6" font-weight="normal" fill="#000" text-anchor="start" textLength="36.80" lengthAdjust="spacingAndGlyphs" >DEFAULT</text>
<text x="576.00" y="88.00" font-family='"Liberation Sans", sans-serif' font-size="9.6" font-weight="normal" fill="#000" text-anchor="start" textLength="24.60" lengthAdjust="spacingAndGlyphs" >Control</text>
<text x="607.80" y="87.70" font-family='"Liberation Sans", sans-serif' font-size="9.6" font-weight="normal" fill="#000" text-anchor="start" textLength="13.60" lengthAdjust="spacingAndGlyphs" >N/A</text>
<text x="7.30" y="671.80" font-family='"Liberation Sans", sans-serif' font-size="8.6" font-weight="normal" fill="#000" text-anchor="start" textLength="33.10" lengthAdjust="spacingAndGlyphs" >Ln 1 Col 1</text>
<text x="918.60" y="671.80" font-family='"Liberation Sans", sans-serif' font-size="8.6" font-weight="normal" fill="#000" text-anchor="start" textLength="145.40" lengthAdjust="spacingAndGlyphs" >The current license will expire in 29 day(s)</text>
<text x="1070.70" y="671.80" font-family='"Liberation Sans", sans-serif' font-size="8.6" font-weight="normal" fill="#000" text-anchor="start" textLength="18.60" lengthAdjust="spacingAndGlyphs" >NUM</text>
<text x="1096.30" y="671.80" font-family='"Liberation Sans", sans-serif' font-size="8.6" font-weight="normal" fill="#a0a0a0" text-anchor="start" textLength="21.50" lengthAdjust="spacingAndGlyphs" >CAPS</text>
<text x="1128.00" y="671.80" font-family='"Liberation Sans", sans-serif' font-size="8.6" font-weight="normal" fill="#a0a0a0" text-anchor="start" textLength="12.60" lengthAdjust="spacingAndGlyphs" >INS</text>
<text x="384.90" y="170.80" font-family='"Liberation Sans", sans-serif' font-size="9.2" font-weight="normal" fill="#ffffff" text-anchor="start" textLength="18.80" lengthAdjust="spacingAndGlyphs" >Send</text>
<text x="394.10" y="402.40" font-family='"Liberation Sans", sans-serif' font-size="8.1" font-weight="normal" fill="#000" text-anchor="start" textLength="17.80" lengthAdjust="spacingAndGlyphs" >State</text>
<text x="400.00" y="416.00" font-family='"Liberation Sans", sans-serif' font-size="8.2" font-weight="normal" fill="#000" text-anchor="start" textLength="11.20" lengthAdjust="spacingAndGlyphs" >CD</text>
<text x="454.70" y="416.00" font-family='"Liberation Sans", sans-serif' font-size="8.2" font-weight="normal" fill="#000" text-anchor="start" textLength="15.80" lengthAdjust="spacingAndGlyphs" >CTS</text>
<text x="510.71" y="416.00" font-family='"Liberation Sans", sans-serif' font-size="8.2" font-weight="normal" fill="#000" text-anchor="start" textLength="15.90" lengthAdjust="spacingAndGlyphs" >DSR</text>
<text x="567.19" y="416.00" font-family='"Liberation Sans", sans-serif' font-size="8.2" font-weight="normal" fill="#000" text-anchor="start" textLength="15.90" lengthAdjust="spacingAndGlyphs" >DTR</text>
<text x="623.67" y="416.00" font-family='"Liberation Sans", sans-serif' font-size="8.2" font-weight="normal" fill="#000" text-anchor="start" textLength="15.90" lengthAdjust="spacingAndGlyphs" >RTS</text>
<text x="681.00" y="416.00" font-family='"Liberation Sans", sans-serif' font-size="8.2" font-weight="normal" fill="#000" text-anchor="start" textLength="15.80" lengthAdjust="spacingAndGlyphs" >RXD</text>
<text x="737.00" y="416.00" font-family='"Liberation Sans", sans-serif' font-size="8.2" font-weight="normal" fill="#000" text-anchor="start" textLength="15.10" lengthAdjust="spacingAndGlyphs" >TXD</text>
<text x="575.90" y="455.10" font-family='"Liberation Sans", sans-serif' font-size="7.4" font-weight="normal" fill="#000" text-anchor="middle" >0%</text>
<text x="400.20" y="479.80" font-family='"Liberation Sans", sans-serif' font-size="8.2" font-weight="normal" fill="#000" text-anchor="start" textLength="109.00" lengthAdjust="spacingAndGlyphs" >Close this dialog when finished</text>
<text x="406.50" y="511.30" font-family='"Liberation Sans", sans-serif' font-size="8.2" font-weight="normal" fill="#000" text-anchor="start" textLength="17.50" lengthAdjust="spacingAndGlyphs" >Help</text>
<text x="664.00" y="511.30" font-family='"Liberation Sans", sans-serif' font-size="8.2" font-weight="normal" fill="#000" text-anchor="start" textLength="10.70" lengthAdjust="spacingAndGlyphs" >OK</text>
<text x="725.70" y="511.80" font-family='"Liberation Sans", sans-serif' font-size="8.2" font-weight="normal" fill="#ffffff" text-anchor="start" textLength="24.90" lengthAdjust="spacingAndGlyphs" >Cancel</text>
<text x="725.20" y="511.30" font-family='"Liberation Sans", sans-serif' font-size="8.2" font-weight="normal" fill="#a0a0a0" text-anchor="start" textLength="24.90" lengthAdjust="spacingAndGlyphs" >Cancel</text>
</g>
</svg>
</body></html>
